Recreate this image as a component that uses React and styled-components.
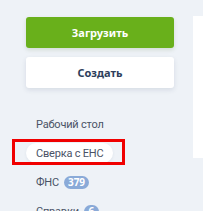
import React from 'react'
import styled, { createGlobalStyle } from 'styled-components'

const GlobalStyle = createGlobalStyle`
    html, body {
        margin: 0;
        padding: 0;
        background-color: #eef2f7;
        font-family: "Noto Sans", "Open Sans", sans-serif;
    }
`

const StyledPage = styled.div`
    display: flex;
    flex-direction: row;
    align-items: flex-start;
    height: 211px;
    overflow: hidden;
`

const StyledSidebar = styled.div`
    width: 148px;
    margin-left: 26px;
    padding-top: 17px;
    display: flex;
    flex-direction: column;
`

const StyledButton = styled.button`
    height: 31px;
    width: 100%;
    border: none;
    border-radius: 3px;
    font-family: inherit;
    font-size: 11px;
    font-weight: 700;
    cursor: pointer;
    background-color: ${p => (p.$primary ? '#69b01b' : '#ffffff')};
    color: ${p => (p.$primary ? '#ffffff' : '#2e3f5c')};
    box-shadow: ${p => (p.$primary ? '0 2px 4px rgba(60,100,20,0.15)' : '0 2px 5px rgba(40,60,100,0.12)')};
    margin-bottom: 9px;
`

const StyledNav = styled.nav`
    margin-top: 17px;
    display: flex;
    flex-direction: column;
    align-items: flex-start;
    gap: 9px;
`

const StyledNavItem = styled.div`
    position: relative;
    display: inline-flex;
    align-items: center;
    gap: 5px;
    height: 20px;
    padding: 0 10px;
    border-radius: 10px;
    font-family: Roboto, "Noto Sans", sans-serif;
    font-size: 11px;
    letter-spacing: -0.2px;
    color: #4a5266;
    background-color: ${p => (p.$active ? '#ffffff' : 'transparent')};
    box-shadow: ${p => (p.$active ? '0 1px 3px rgba(40,60,100,0.08)' : 'none')};
    white-space: nowrap;
`

const StyledBadge = styled.span`
    display: inline-flex;
    align-items: center;
    justify-content: center;
    height: 13px;
    min-width: 7px;
    padding: 0 4px;
    border-radius: 7px;
    background-color: #8aaad8;
    color: #ffffff;
    font-family: "Noto Sans", sans-serif;
    font-size: 10px;
    font-weight: 700;
    letter-spacing: 0;
`

const StyledHighlight = styled.div`
    position: absolute;
    left: -14px;
    top: -4px;
    width: 113px;
    height: 26px;
    box-sizing: border-box;
    border: 3px solid #f00000;
    pointer-events: none;
`

const StyledPanel = styled.div`
    margin-top: 16px;
    margin-left: 19px;
    flex: 1;
    height: 142px;
    background-color: #ffffff;
`

const items = [
    { label: 'Рабочий стол' },
    { label: 'Сверка с ЕНС', active: true },
    { label: 'ФНС', badge: '379' },
    { label: 'Справки', badge: '6' },
]

function App() {
    return (
        <StyledPage>
            <GlobalStyle />
            <StyledSidebar>
                <StyledButton $primary>Загрузить</StyledButton>
                <StyledButton>Создать</StyledButton>

                <StyledNav>
                    {items.map((item, i) => (
                        <StyledNavItem key={i} $active={item.active}>
                            {item.label}
                            {item.badge && <StyledBadge>{item.badge}</StyledBadge>}
                            {item.active && <StyledHighlight />}
                        </StyledNavItem>
                    ))}
                </StyledNav>
            </StyledSidebar>

            <StyledPanel />
        </StyledPage>
    )
}

export default App
